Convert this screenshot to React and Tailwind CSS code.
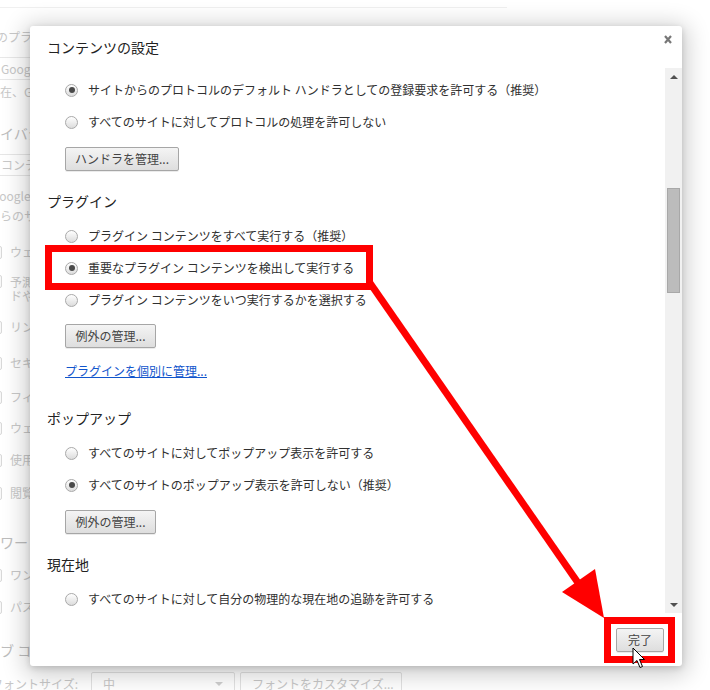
import React from 'react';

const Radio = ({ checked }) => (
  <span className="w-[13px] h-[13px] shrink-0 rounded-full border border-[#a9a9a9] bg-gradient-to-b from-white to-[#dcdcdc] flex items-center justify-center">
    {checked && <span className="w-[6px] h-[6px] rounded-full bg-[#4a4a4a]" />}
  </span>
);

const Option = ({ checked, label }) => (
  <div className="h-[32px] pl-[35px] flex items-center gap-[10px] text-[12px] leading-[16px] text-[#303030] whitespace-nowrap">
    <Radio checked={checked} />
    <span>{label}</span>
  </div>
);

const Btn = ({ className, children }) => (
  <button
    className={`h-[24px] rounded-[2px] border border-[#a6a6a6] bg-gradient-to-b from-[#f4f4f4] to-[#dedede] shadow-[0_1px_0_rgba(0,0,0,0.08)] text-[12px] leading-[16px] text-[#444] flex items-center justify-center ${className}`}
  >
    {children}
  </button>
);

const Heading = ({ className, children }) => (
  <div className={`h-[20px] pl-[17px] text-[14px] leading-[20px] text-[#222] ${className}`}>{children}</div>
);

const Check = () => (
  <span className="w-[13px] h-[13px] shrink-0 -ml-[11px] rounded-[2px] border border-[#d8d8d8] bg-[#f8f8f8]" />
);

// faded settings page behind the dialog, only its left edge shows
const BackgroundPage = () => (
  <div className="flex flex-col text-[12px] leading-[16px] text-[#c8c8c8] whitespace-nowrap">
    <div className="h-[8px] w-[507px] border-b border-[#f0f0f0]" />
    <div className="mt-[21px] -ml-[4px]">のプラ</div>
    <div className="mt-[12px] -ml-[9px] w-[200px] h-[23px] border border-[#e8e8e8] pl-[9px] flex items-center">Google</div>
    <div className="mt-[4px]">在、G</div>
    <div className="mt-[23px] h-[20px] text-[14px] leading-[20px] text-[#bdbdbd]">イバシ</div>
    <div className="mt-[11px] -ml-[12px] w-[150px] h-[22px] border border-[#e6e6e6] rounded-[2px] pl-[12px] flex items-center">コンテ</div>
    <div className="mt-[12px] -ml-[9px]">Google</div>
    <div className="mt-[4px]">らのサ</div>
    <div className="mt-[20px] flex items-center gap-[8px]"><Check />ウェ</div>
    <div className="mt-[15px] flex items-start gap-[8px] leading-[14px]">
      <Check />
      <div className="flex flex-col">
        <span>予測</span>
        <span>ドや</span>
      </div>
    </div>
    <div className="mt-[16px] flex items-center gap-[8px]"><Check />リン</div>
    <div className="mt-[20px] flex items-center gap-[8px]"><Check />セキ</div>
    <div className="mt-[18px] flex items-center gap-[8px]"><Check />フィ</div>
    <div className="mt-[15px] flex items-center gap-[8px]"><Check />ウェ</div>
    <div className="mt-[16px] flex items-center gap-[8px]"><Check />使用</div>
    <div className="mt-[17px] flex items-center gap-[8px]"><Check />閲覧</div>
    <div className="mt-[31px] h-[20px] text-[14px] leading-[20px] text-[#bdbdbd]">ワー</div>
    <div className="mt-[15px] flex items-center gap-[8px]"><Check />ワン</div>
    <div className="mt-[16px] flex items-center gap-[8px]"><Check />パス</div>
    <div className="mt-[25px] h-[20px] text-[14px] leading-[20px] text-[#bdbdbd]">ブ コ</div>
    <div className="mt-[12px] flex items-center gap-[5px]">
      <span className="-ml-[9px] w-[95px]">フォントサイズ:</span>
      <span className="w-[144px] h-[24px] border border-[#e2e2e2] rounded-[2px] px-[11px] flex items-center justify-between">
        <span>中</span>
        <svg width="8" height="4" viewBox="0 0 8 4"><polygon points="0,0 8,0 4,4" fill="#cfcfcf" /></svg>
      </span>
      <span className="w-[162px] h-[24px] border border-[#e2e2e2] rounded-[2px] pl-[11px] flex items-center">フォントをカスタマイズ...</span>
    </div>
  </div>
);

const Scrollbar = () => (
  <div className="w-[17px] shrink-0 bg-[#f1f1f1] flex flex-col">
    <div className="h-[17px] flex items-center justify-center">
      <svg width="8" height="4" viewBox="0 0 8 4"><polygon points="0,4 8,4 4,0" fill="#505050" /></svg>
    </div>
    <div className="mt-[103px] mx-[2px] h-[105px] bg-[#bcbcbc] border border-[#a8a8a8]" />
    <div className="flex-1" />
    <div className="h-[17px] flex items-center justify-center">
      <svg width="8" height="4" viewBox="0 0 8 4"><polygon points="0,0 8,0 4,4" fill="#505050" /></svg>
    </div>
  </div>
);

const Dialog = () => (
  <div className="absolute left-[30px] top-[26px] w-[652px] h-[640px] bg-white rounded-[3px] shadow-[0_4px_23px_5px_rgba(0,0,0,0.2),0_2px_6px_rgba(0,0,0,0.15)] flex flex-col">
    <div className="h-[42px] shrink-0 flex justify-between items-start pl-[17px] pr-[10px] pt-[9px]">
      <div className="mt-[3px] text-[14px] leading-[18px] text-[#222]">コンテンツの設定</div>
      <svg width="8" height="9" viewBox="0 0 8 9">
        <path d="M1 1 L7 8 M7 1 L1 8" stroke="#777" strokeWidth="2.2" />
      </svg>
    </div>

    <div className="flex-1 flex min-h-0">
      <div className="flex-1 overflow-hidden pt-[6px]">
        <Option checked label="サイトからのプロトコルのデフォルト ハンドラとしての登録要求を許可する（推奨）" />
        <Option label="すべてのサイトに対してプロトコルの処理を許可しない" />
        <Btn className="mt-[9px] ml-[35px] w-[114px]">ハンドラを管理...</Btn>

        <Heading className="mt-[20px]">プラグイン</Heading>
        <div className="mt-[9px]">
          <Option label="プラグイン コンテンツをすべて実行する（推奨）" />
          <Option checked label="重要なプラグイン コンテンツを検出して実行する" />
          <Option label="プラグイン コンテンツをいつ実行するかを選択する" />
        </div>
        <Btn className="mt-[8px] ml-[35px] w-[91px]">例外の管理...</Btn>
        <div className="mt-[14px] ml-[35px] h-[18px] text-[12px] leading-[18px] text-[#1155cc] underline">プラグインを個別に管理...</div>

        <Heading className="mt-[28px]">ポップアップ</Heading>
        <div className="mt-[9px]">
          <Option label="すべてのサイトに対してポップアップ表示を許可する" />
          <Option checked label="すべてのサイトのポップアップ表示を許可しない（推奨）" />
        </div>
        <Btn className="mt-[9px] ml-[35px] w-[91px]">例外の管理...</Btn>

        <Heading className="mt-[20px]">現在地</Heading>
        <div className="mt-[9px]">
          <Option label="すべてのサイトに対して自分の物理的な現在地の追跡を許可する" />
        </div>
      </div>
      <Scrollbar />
    </div>

    <div className="h-[53px] shrink-0 flex justify-end items-start pt-[15px] pr-[18px]">
      <Btn className="w-[48px] text-[#333]">完了</Btn>
    </div>
  </div>
);

const Annotations = () => (
  <svg className="absolute inset-0 pointer-events-none" width="710" height="690" viewBox="0 0 710 690">
    <rect x="48.5" y="248.5" width="321" height="38" fill="none" stroke="#ff0000" strokeWidth="7" />
    <line x1="370" y1="283" x2="583" y2="590" stroke="#ff0000" strokeWidth="7" />
    <polygon points="604,618 562,592 595,569" fill="#ff0000" />
    <rect x="607.5" y="620.5" width="64" height="39" fill="none" stroke="#ff0000" strokeWidth="7" />
    <path d="M633 648 L633 664 L637 660.5 L640 667.5 L642.5 666.5 L639.5 659.5 L644.5 659.5 Z" fill="#fff" stroke="#000" strokeWidth="1" strokeLinejoin="round" />
  </svg>
);

export default function App() {
  return (
    <div className="relative w-[710px] h-[690px] overflow-hidden bg-white font-['Noto_Sans_CJK_JP','Noto_Sans',sans-serif]">
      <BackgroundPage />
      <Dialog />
      <Annotations />
    </div>
  );
}
